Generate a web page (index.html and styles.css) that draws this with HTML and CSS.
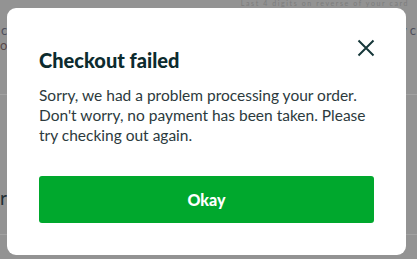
FILE: index.html
```html
<!DOCTYPE html>
<html lang="en">
<head>
<meta charset="utf-8">
<link rel="stylesheet" href="styles.css">
<title>Checkout failed</title>
</head>
<body>
<div class="page">
  <div class="page-top">Last 4 digits on reverse of your card</div>
  <div class="page-row row-a"><span>card number</span><span>privacy v c</span></div>
  <div class="page-row row-b"><span>on</span><span></span></div>
  <div class="page-rule rule-a"></div>
  <div class="page-row row-c"><span>review</span><span></span></div>
  <div class="page-rule rule-b"></div>
</div>
<div class="modal" role="dialog" aria-labelledby="mtitle">
  <button class="close" aria-label="Close">
    <svg width="18" height="18" viewBox="0 0 18 18"><path d="M1.5 1.5 L16.5 16.5 M16.5 1.5 L1.5 16.5" stroke="#17383a" stroke-width="2" fill="none"/></svg>
  </button>
  <h2 id="mtitle" class="title">Checkout failed</h2>
  <p class="msg">Sorry, we had a problem processing your order. Don't worry, no payment has been taken. Please try checking out again.</p>
  <button class="okay">Okay</button>
</div>
</body>
</html>
```
FILE: styles.css
```css
* { box-sizing: border-box; }
html, body { margin: 0; padding: 0; }
body {
  width: 417px;
  height: 259px;
  overflow: hidden;
  background: #939393;
  font-family: "Lato", "Liberation Sans", sans-serif;
}
.page { position: relative; height: 259px; }
.page-top {
  text-align: right;
  padding-right: 8px;
  font-size: 7px;
  line-height: 7px;
  letter-spacing: 1.6px;
  color: #7c7c7c;
}
.page-row {
  display: flex;
  justify-content: space-between;
  font-size: 13px;
  line-height: 15px;
  color: #4f4f5c;
  white-space: nowrap;
}
.row-a { margin-top: 16px; padding-left: 1px; padding-right: 1px; }
.row-b { margin-top: 0px; color: #5a4a4a; }
.page-rule { height: 1px; background: #a2a2a2; }
.rule-a { margin-top: 41px; }
.row-c { margin-top: 93px; font-size: 19px; line-height: 20px; color: #1f2e33; }
.rule-b { margin-top: 26px; }

.modal {
  position: absolute;
  left: 7px;
  top: 8px;
  width: 399px;
  height: 247px;
  background: #fff;
  border-radius: 9px;
  padding: 40px 32px 32px 32px;
  display: flex;
  flex-direction: column;
}
.close {
  position: absolute;
  left: 350px;
  top: 31px;
  width: 18px;
  height: 18px;
  padding: 0;
  border: 0;
  background: none;
  display: flex;
}
.title {
  margin: 0;
  font-size: 20px;
  line-height: 24px;
  font-weight: 900;
  color: #0c2b2e;
}
.msg {
  margin: 13px 0 0 0;
  font-size: 15.5px;
  line-height: 20px;
  color: #2c3a3d;
  font-weight: 400;
}
.okay {
  flex-shrink: 0;
  margin-top: 31px;
  height: 47px;
  width: 100%;
  border: 0;
  border-radius: 3px;
  background: #00a82d;
  color: #fff;
  font-family: inherit;
  font-size: 16px;
  font-weight: 900;
}
```
